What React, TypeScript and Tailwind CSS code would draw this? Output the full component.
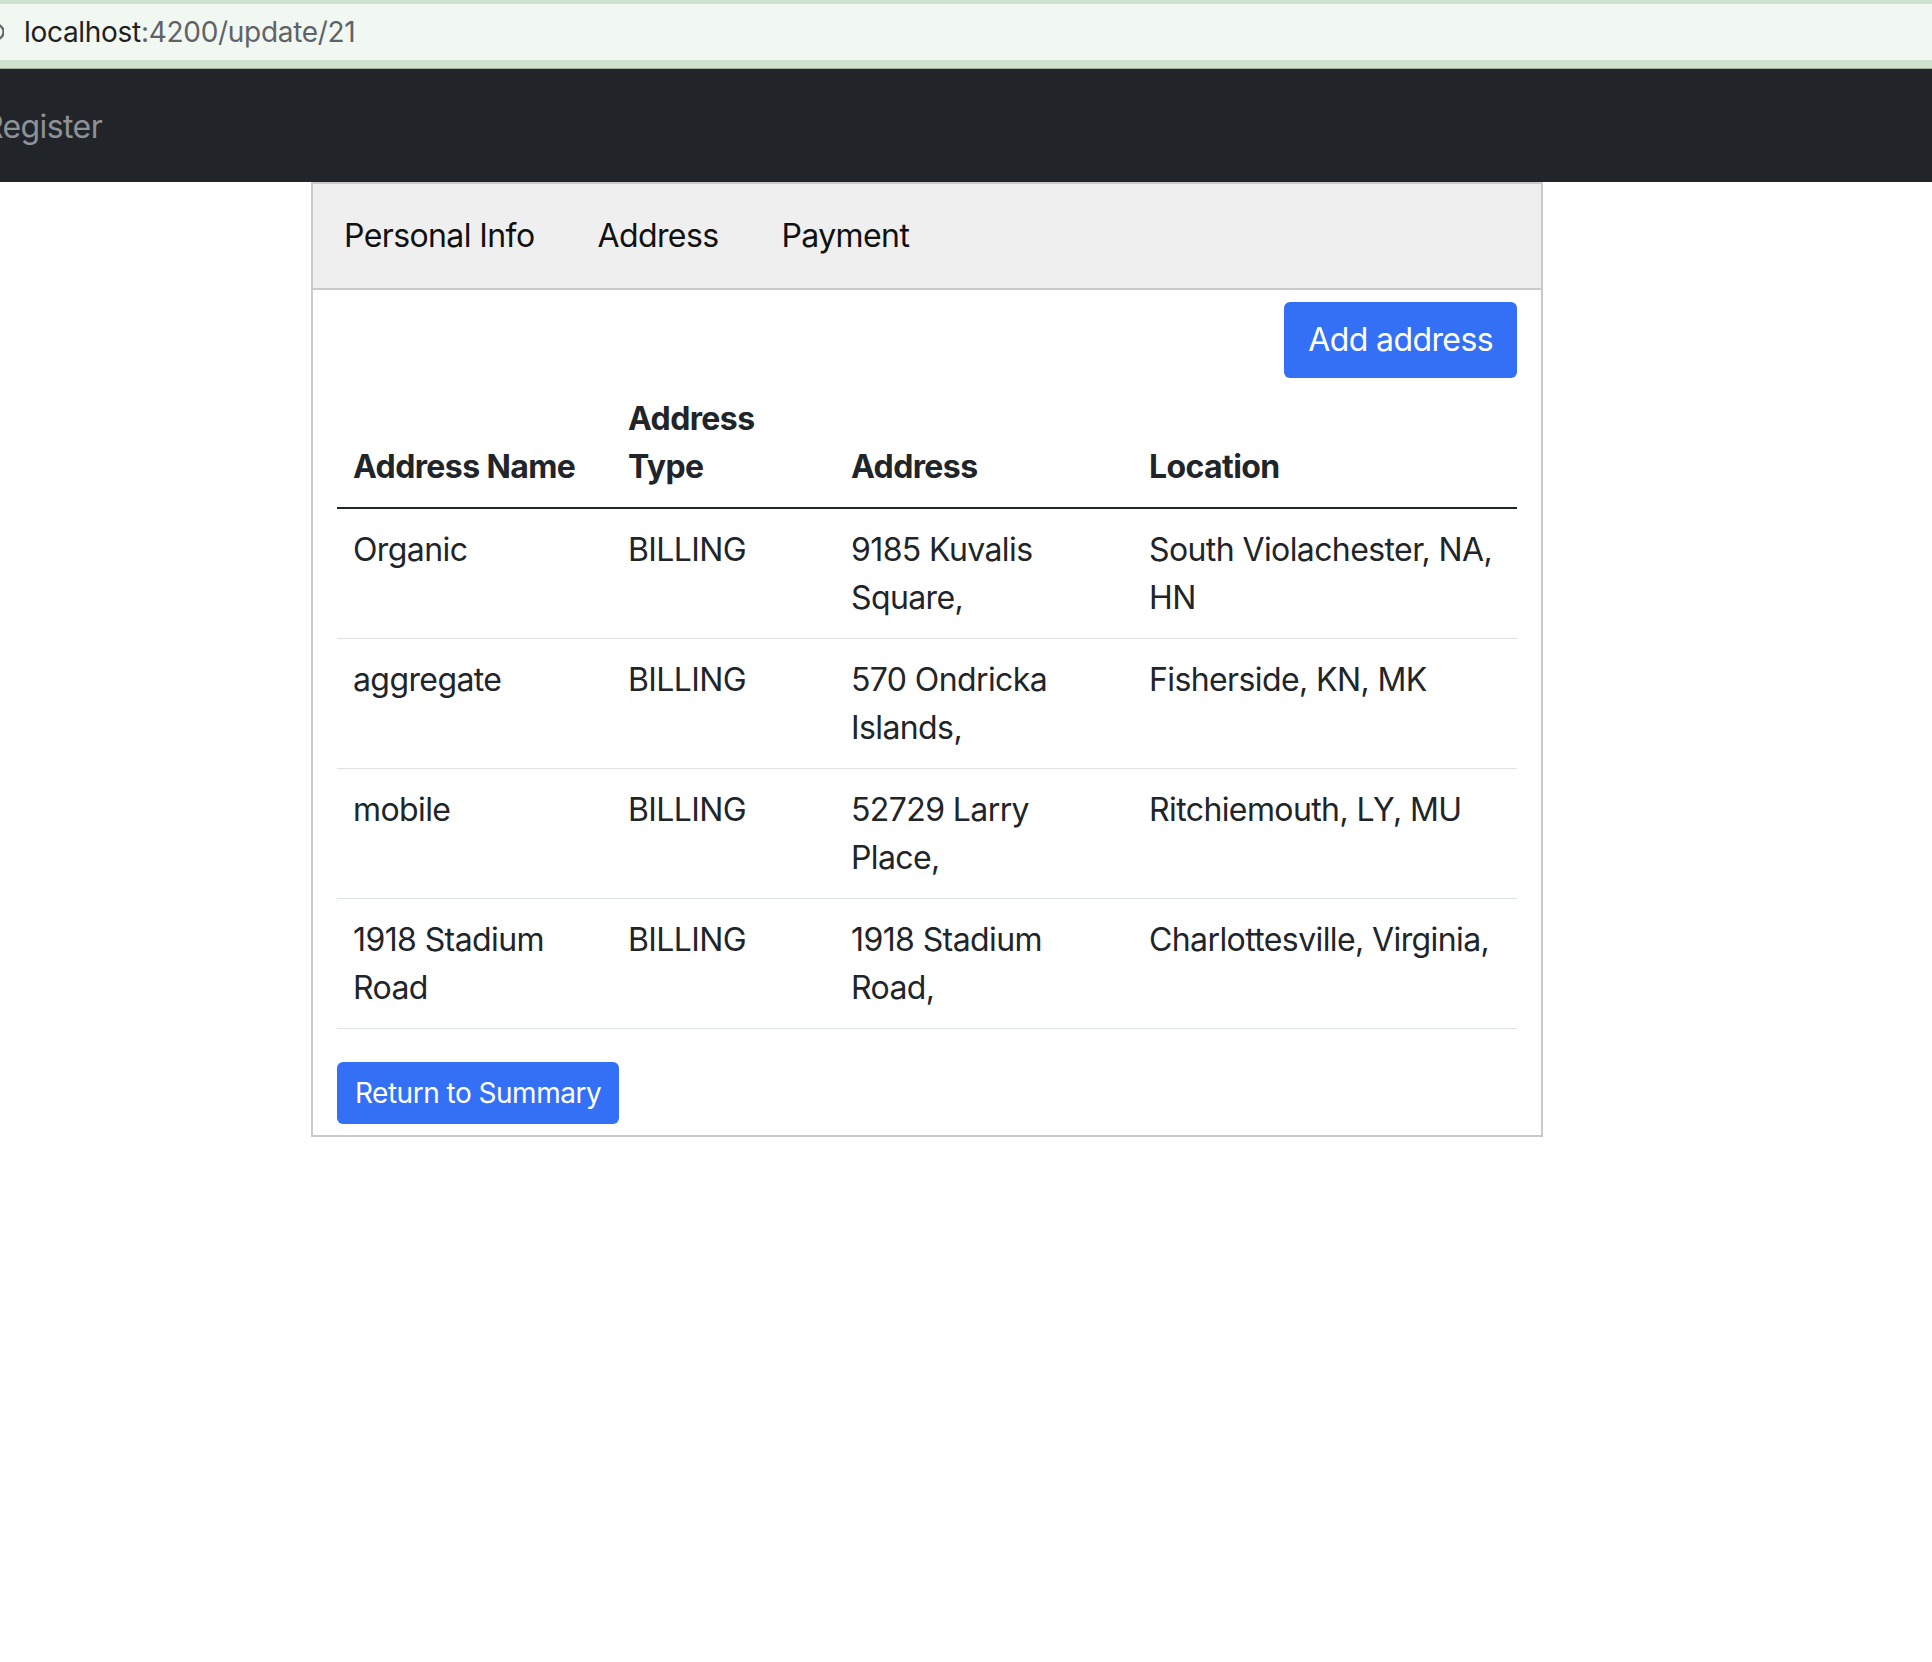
import React from "react";

type AddressRow = {
  name: string;
  type: string;
  address: string;
  location: string;
};

const rows: AddressRow[] = [
  { name: "Organic", type: "BILLING", address: "9185 Kuvalis Square,", location: "South Violachester, NA, HN" },
  { name: "aggregate", type: "BILLING", address: "570 Ondricka Islands,", location: "Fisherside, KN, MK" },
  { name: "mobile", type: "BILLING", address: "52729 Larry Place,", location: "Ritchiemouth, LY, MU" },
  { name: "1918 Stadium Road", type: "BILLING", address: "1918 Stadium Road,", location: "Charlottesville, Virginia," },
];

const tabs = ["Personal Info", "Address", "Payment"];

function UrlBar() {
  return (
    <>
      <div className="h-[68px] bg-[#f1f7f1] border-t-[4px] border-b-[8px] border-[#cfe3cf] flex items-center">
        <svg width="4" height="20" viewBox="0 0 4 20" className="shrink-0">
          <circle cx="-4" cy="10" r="7.5" fill="none" stroke="#5f6368" strokeWidth="2.2" />
        </svg>
        <div className="ml-[20px] text-[28px] tracking-[-0.3px] leading-none">
          <span className="text-[#1f1f1f]">localhost</span>
          <span className="text-[#5f6368]">:4200/update/21</span>
        </div>
      </div>
      <div className="h-px bg-[#9fb09f]" />
    </>
  );
}

function Navbar() {
  return (
    <div className="h-[113px] bg-[#212529] flex items-center overflow-hidden pt-[2px]">
      <span className="-ml-[17px] text-[32px] tracking-[-0.6px] text-[#8e9196]">Register</span>
    </div>
  );
}

export default function App() {
  return (
    <div className="min-h-[1662px] bg-white font-['Inter','Noto_Sans',sans-serif] text-[#212529]">
      <UrlBar />
      <Navbar />

      <div className="ml-[311px] w-[1232px] border-2 border-t-0 border-[#cacaca]">
        {/* tabs */}
        <div className="h-[108px] bg-[#efefef] border-t-2 border-b-2 border-[#cacaca] flex items-center pl-[31px] gap-[63px]">
          {tabs.map((t) => (
            <span key={t} className="text-[32px] tracking-[-0.6px] text-[#111]">
              {t}
            </span>
          ))}
        </div>

        <div className="px-[24px] pt-[12px] pb-[11px]">
          <div className="flex justify-end">
            <button className="h-[76px] px-[24px] rounded-[6px] bg-[#3470f5] text-white text-[32px] tracking-[-0.6px]">
              Add address
            </button>
          </div>

          <table className="w-full table-fixed border-collapse text-[32px] leading-[48px] tracking-[-0.6px]">
            <colgroup>
              <col className="w-[275px]" />
              <col className="w-[223px]" />
              <col className="w-[298px]" />
              <col />
            </colgroup>
            <thead>
              <tr className="border-b-2 border-[#212529]">
                <th className="px-[16px] pt-[17px] pb-[16px] text-left align-bottom font-bold">Address Name</th>
                <th className="px-[16px] pt-[17px] pb-[16px] text-left align-bottom font-bold">Address Type</th>
                <th className="px-[16px] pt-[17px] pb-[16px] text-left align-bottom font-bold">Address</th>
                <th className="px-[16px] pt-[17px] pb-[16px] text-left align-bottom font-bold">Location</th>
              </tr>
            </thead>
            <tbody>
              {rows.map((r) => (
                <tr key={r.name} className="border-b border-[#dee2e6]">
                  <td className="px-[16px] pt-[17px] pb-[16px] align-top">{r.name}</td>
                  <td className="px-[16px] pt-[17px] pb-[16px] align-top">{r.type}</td>
                  <td className="px-[16px] pt-[17px] pb-[16px] align-top">{r.address}</td>
                  <td className="px-[16px] pt-[17px] pb-[16px] align-top">{r.location}</td>
                </tr>
              ))}
            </tbody>
          </table>

          <button className="mt-[33px] h-[62px] px-[18px] rounded-[6px] bg-[#3470f5] text-white text-[28px] tracking-[-0.5px]">
            Return to Summary
          </button>
        </div>
      </div>
    </div>
  );
}
